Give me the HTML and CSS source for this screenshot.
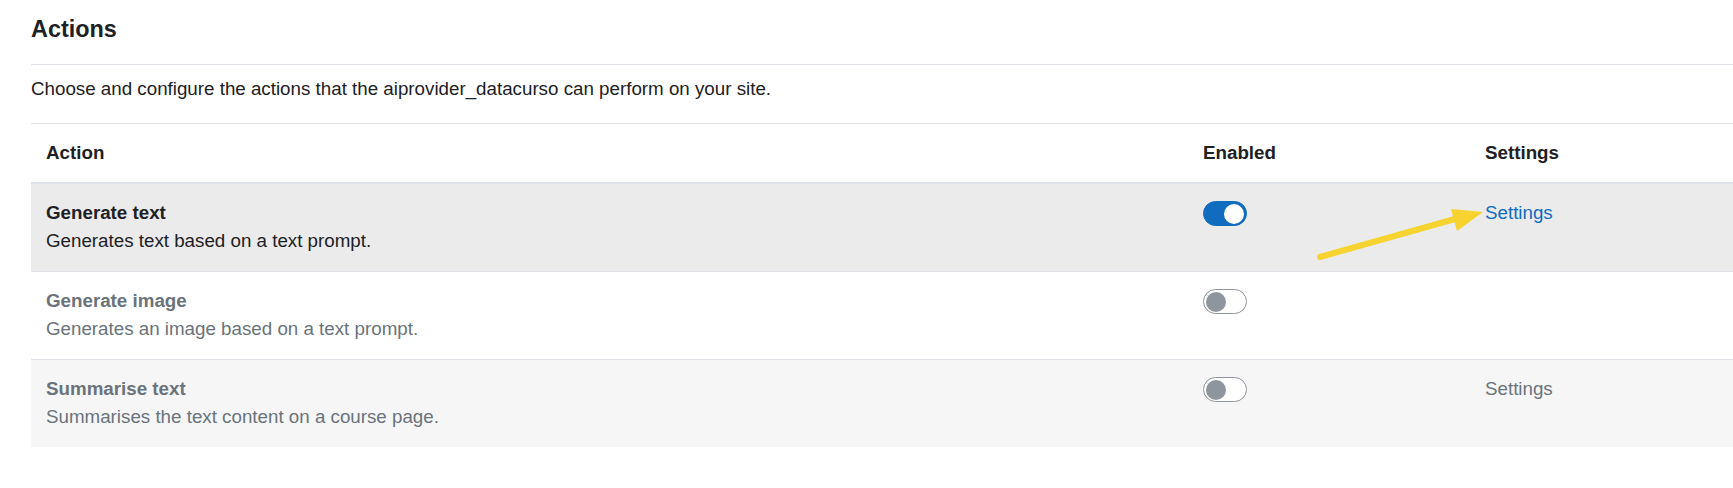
FILE: index.html
```html
<!DOCTYPE html>
<html lang="en">
<head>
<meta charset="utf-8">
<title>Actions</title>
<link rel="stylesheet" href="styles.css">
</head>
<body>
<div class="page">
  <h2 class="heading">Actions</h2>
  <p class="intro">Choose and configure the actions that the aiprovider_datacurso can perform on your site.</p>
  <table class="actions">
    <colgroup>
      <col class="c-action">
      <col class="c-enabled">
      <col class="c-settings">
    </colgroup>
    <thead>
      <tr>
        <th>Action</th>
        <th>Enabled</th>
        <th>Settings</th>
      </tr>
    </thead>
    <tbody>
      <tr class="row-hover">
        <td><div class="name">Generate text</div><div class="desc">Generates text based on a text prompt.</div></td>
        <td><span class="switch on"><span class="knob"></span></span></td>
        <td><a class="link" href="#">Settings</a></td>
      </tr>
      <tr class="row-off">
        <td><div class="name">Generate image</div><div class="desc">Generates an image based on a text prompt.</div></td>
        <td><span class="switch"><span class="knob"></span></span></td>
        <td></td>
      </tr>
      <tr class="row-off row-stripe">
        <td><div class="name">Summarise text</div><div class="desc">Summarises the text content on a course page.</div></td>
        <td><span class="switch"><span class="knob"></span></span></td>
        <td><span class="link-muted">Settings</span></td>
      </tr>
    </tbody>
  </table>
</div>
<svg class="arrow" width="1733" height="488" viewBox="0 0 1733 488" aria-hidden="true">
  <line x1="1320" y1="257" x2="1462" y2="217" stroke="#f6d32f" stroke-width="6" stroke-linecap="round"/>
  <polygon points="1451,209 1483,212 1457,231" fill="#f6d32f"/>
</svg>
</body>
</html>
```
FILE: styles.css
```css
html, body {
  margin: 0;
  padding: 0;
  background: #fff;
}
body {
  font-family: "Liberation Sans", Arial, sans-serif;
  color: #1d2125;
  font-size: 18.75px;
  line-height: 28px;
  position: relative;
  overflow: hidden;
  height: 488px;
}
.page {
  padding: 15px 0 0 31px;
}
.heading {
  margin: 0;
  font-size: 23.4px;
  line-height: 28px;
  font-weight: 700;
  padding-bottom: 21px;
  border-bottom: 1px solid #dee2e6;
}
.intro {
  margin: 10px 0 20px;
}
.actions {
  width: 100%;
  border-collapse: collapse;
  table-layout: fixed;
}
.c-action { width: 1157px; }
.c-enabled { width: 282px; }
.actions th {
  text-align: left;
  font-weight: 700;
  padding: 15px;
  border-top: 1px solid #dee2e6;
  border-bottom: 2px solid #dee2e6;
  vertical-align: top;
}
.actions td {
  padding: 15px 15px 16px;
  vertical-align: top;
  border-top: 1px solid #dee2e6;
}
.actions tbody tr:first-child td {
  border-top: 0;
}
.row-hover td { background: #ebebeb; }
.row-stripe td { background: #f6f6f6; }
.name { font-weight: 700; }
.row-off td { color: #6a737b; }
.switch {
  display: block;
  box-sizing: border-box;
  width: 44px;
  height: 25px;
  margin-top: 2px;
  border-radius: 13px;
  border: 1px solid #8f959e;
  background: #fff;
  position: relative;
}
.switch .knob {
  position: absolute;
  top: 1.5px;
  left: 2px;
  width: 20px;
  height: 20px;
  border-radius: 50%;
  background: #8f959e;
}
.switch.on {
  background: #0f6cbf;
  border-color: #0f6cbf;
}
.switch.on .knob {
  left: auto;
  right: 2px;
  background: #fff;
}
.link {
  color: #0f6cbf;
  text-decoration: none;
}
.link-muted { color: #6a737b; }
.arrow {
  position: absolute;
  left: 0;
  top: 0;
  pointer-events: none;
}
```
